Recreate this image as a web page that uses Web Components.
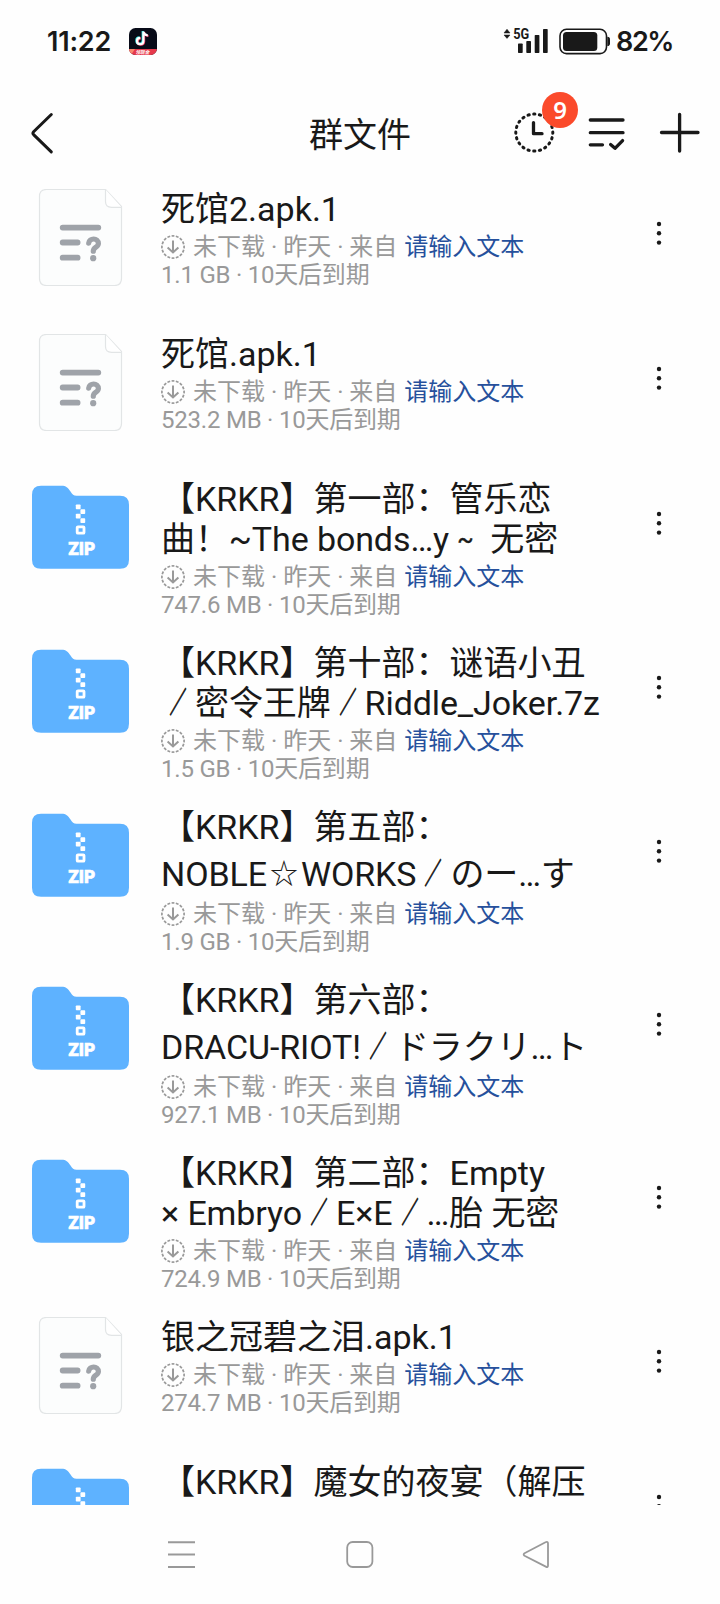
<!DOCTYPE html>
<html lang="zh-CN">
<head>
<meta charset="utf-8">
<title>群文件</title>
<style>
html,body{margin:0;background:#fefefe}
body{width:720px;height:1604px;overflow:hidden;font-family:Roboto,"Noto Sans CJK SC",sans-serif;color:#191919;text-spacing-trim:space-all}
</style>
</head>
<body>
<group-files></group-files>
<script>
const define = (name, html, setup) => customElements.define(name, class extends HTMLElement {
  connectedCallback() {
    if (this.shadowRoot) return;
    const t = document.createElement('template');
    t.innerHTML = html.trim();
    this.attachShadow({mode: 'open'}).append(t.content.cloneNode(true));
    if (setup) setup(this, this.shadowRoot);
  }
});

define('status-bar', `
<style>
:host{display:flex;align-items:flex-start;height:82px;box-sizing:border-box;padding:0 47px;font-family:Inter,Roboto,sans-serif;font-weight:600;font-size:27px;line-height:83px}
.time{width:82px;letter-spacing:-.2px}
.spacer{flex:1}
svg{display:block;flex:none}
.pct{width:57px;margin-left:6px;white-space:nowrap;line-height:84px;letter-spacing:-1.4px}
</style>
<span class="time">11:22</span>
<svg width="28" height="82" viewBox="129 0 28 82">
  <defs><clipPath id="c"><rect x="129" y="28" width="28" height="27" rx="6.5"/></clipPath></defs>
  <g clip-path="url(#c)">
    <rect x="129" y="28" width="28" height="27" fill="#080b18"/>
    <path d="M129 49H157V55H129Z" fill="#e6394c"/><path d="M129 49h6l-4 6h-2z" fill="#f8876d"/>
    <g fill="none" stroke-width="2.2"><path d="M143.4 31.5v9.7a3.2 3.2 0 1 1-3.2-3.4M143.4 32c.5 2 2 3.2 4.4 3.5" stroke="#35e5e4" transform="translate(-.7 -.5)"/><path d="M143.4 31.5v9.7a3.2 3.2 0 1 1-3.2-3.4M143.4 32c.5 2 2 3.2 4.4 3.5" stroke="#f23d63" transform="translate(.7 .5)"/><path d="M143.4 31.5v9.7a3.2 3.2 0 1 1-3.2-3.4M143.4 32c.5 2 2 3.2 4.4 3.5" stroke="#fff"/></g>
    <text x="135.5" y="53.8" font-family="Noto Sans CJK SC,sans-serif" font-size="4.6" font-weight="700" font-style="italic" fill="#fff">领现金</text>
  </g>
</svg>
<span class="spacer"></span>
<svg width="107" height="82" viewBox="503 0 107 82" fill="#191919">
  <path d="M504 33l3-3.8 3 3.8zM504 35l3 3.4 3-3.4z" stroke="#191919" stroke-width=".5"/>
  <text x="513.3" y="39" font-family="Roboto,sans-serif" font-size="13.8" font-weight="700" textLength="16" lengthAdjust="spacingAndGlyphs">5G</text>
  <rect x="518" y="43.5" width="4.7" height="9.5" rx=".7"/><rect x="526.3" y="41" width="4.7" height="12" rx=".7"/><rect x="534.7" y="35" width="4.7" height="18" rx=".7"/><rect x="543" y="29" width="4.7" height="24" rx=".7"/>
  <rect x="560" y="29.3" width="46.5" height="24.3" rx="6.5" fill="none" stroke="#191919" stroke-width="1.6"/>
  <rect x="563" y="32" width="34.3" height="19" rx="3.5"/>
  <path d="M607.3 36.8c2 0 2.7 1.2 2.7 2.6v4c0 1.400-.7 2.600-2.700 2.600z"/>
</svg>
<span class="pct">82%</span>`);

define('nav-header', `
<style>
:host{display:grid;grid-template-columns:309px 1fr 220px;height:107px}
h1{margin:0;font-size:34px;font-weight:400;line-height:106px;white-space:nowrap}
svg{display:block}
.r{position:relative;width:220px}
.badge{position:absolute;left:42px;top:10px;width:36px;height:36px;border-radius:50%;background:#fb4a2b;color:#fff;text-align:center;font:600 24px/35px "Noto Sans",sans-serif}
</style>
<svg width="309" height="107" viewBox="0 82 309 107"><path d="M51.300 114.500L33.600 131.800Q32.300 133.200 33.600 134.600L51.300 151.900" fill="none" stroke="#191919" stroke-width="3" stroke-linecap="round"/></svg>
<h1>群文件</h1>
<div class="r">
<svg width="220" height="107" viewBox="500 82 220 107" fill="none" stroke="#191919" stroke-width="3.300" stroke-linecap="round" stroke-linejoin="round">
  <circle cx="534.300" cy="132.600" r="18.500" pathLength="120" stroke-width="3" stroke-dasharray="1.300 4.700" stroke-dashoffset=".65"/>
  <path d="M533.500 122.600V133.700H542"/>
  <path d="M590.300 120H623M590.300 132.700H623M590.300 144.800H602.500M610.600 144.500L615 148.300L622.600 140.600"/>
  <path d="M661.500 132.500H698M679.600 114.300V151"/>
</svg><span class="badge">9</span></div>`);

define('doc-icon', `
<style>:host,svg{display:block}</style>
<svg width="97" height="97" viewBox="32 189 97 97">
  <path d="M46.500 189.500H105.500L121.500 206.500V278.500Q121.500 285.500 114.500 285.500H46.500Q39.500 285.500 39.500 278.500V196.500Q39.500 189.500 46.500 189.500Z" fill="#fcfdfd" stroke="#e2e5e6" stroke-width="1.200"/>
  <path d="M105.500 189.500V201.500Q105.500 207.300 111.500 207.300H121.500" fill="#fff" stroke="#e2e5e6" stroke-width="1.200"/>
  <g fill="none" stroke="#9fa3a9" stroke-width="5.800" stroke-linecap="round"><path d="M62.700 227.600H98.300M62.700 242.500H77.600M62.700 257.700H77.600"/><path d="M88.700 243.200C89 237.700 98.400 237.400 98.400 243.600C98.400 247.500 93.300 247 93.300 251.200" stroke-width="5.200"/></g>
  <circle cx="93.200" cy="258.200" r="3.100" fill="#9fa3a9"/>
</svg>`);

define('zip-icon', `
<style>:host,svg{display:block}</style>
<svg width="97" height="97" viewBox="32 479 97 97">
  <path d="M41 485.700H61.500C66 485.700 68 487.700 70.500 491.500C72.500 494.500 73.500 495.700 76.500 495.700H120Q129 495.700 129 504.700V559.700Q129 568.700 120 568.700H41Q32 568.700 32 559.700V494.700Q32 485.700 41 485.700Z" fill="#5eb2ff"/>
  <g fill="#fff"><rect x="75.800" y="504.500" width="4.800" height="4.800" rx=".8"/><rect x="80.400" y="509.200" width="4.800" height="4.800" rx=".8"/><rect x="75.800" y="513.800" width="4.800" height="4.800" rx=".8"/><rect x="80.400" y="518.300" width="4.800" height="4.800" rx=".8"/></g>
  <rect x="77.200" y="526.800" width="6.800" height="6.400" rx=".8" fill="none" stroke="#fff" stroke-width="2.800"/>
  <text x="68.200" y="555" font-family="Roboto,sans-serif" font-weight="900" font-size="18.600" textLength="27" lengthAdjust="spacingAndGlyphs" fill="#fff" stroke="#fff" stroke-width=".6">ZIP</text>
</svg>`);

define('file-row', `
<style>
:host{display:grid;grid-template-columns:97px 450px 1fr;column-gap:32px;padding-left:32px;min-height:145px;box-sizing:border-box;align-items:start;flex:none}
:host([lines="2"]){height:164px}
:host([tall]){height:173px}
.meta{display:flex;align-items:center;height:28px;font-size:24px;line-height:28px;color:#999;white-space:pre}
.first{margin-top:3px}
.size{letter-spacing:-.22px}
.meta svg{flex:none;margin-right:7px}
b{font-weight:400;color:#26509c;margin-left:1px}
.more{display:block;margin-top:30px}
</style>
<div class="ic"></div>
<div>
  <slot></slot>
  <div class="meta first"><svg width="25" height="28" viewBox="0 0 25 28" fill="none" stroke="#999" stroke-width="1.700"><circle cx="12" cy="14" r="11.100" pathLength="96" stroke-dasharray="4 2" stroke-dashoffset="2"/><path d="M12 7.500V19M6.600 14.500L12 19.500L17.400 14.500" stroke-width="2"/></svg><span>未下载 · 昨天 · 来自 <b>请输入文本</b></span></div>
  <div class="meta size"></div>
</div>
<svg class="more" width="30" height="32" viewBox="0 0 30 32" fill="#191919"><circle cx="16" cy="5" r="2.200"/><circle cx="16" cy="14.300" r="2.200"/><circle cx="16" cy="23.600" r="2.200"/></svg>`,
(el, root) => {
  const icon = document.createElement(el.getAttribute('kind') + '-icon');
  root.querySelector('.ic').append(icon);
  const size = el.getAttribute('size');
  if (size) root.querySelector('.size').textContent = size + ' · 10天后到期';
  else {
    root.querySelectorAll('.meta').forEach(m => m.remove());
    icon.shadowRoot.querySelector('text').remove();
  }
});

define('title-line', `
<style>
:host{display:block;height:40.500px;font-size:34px;line-height:40px;white-space:pre}
:host(:nth-of-type(2)){line-height:39px;letter-spacing:-.1px}
:host([tall]){height:49px;line-height:53px}
::slotted(i){display:inline-block;width:34px;font-style:normal;transform:scale(.5,.86);-webkit-text-stroke:1.100px}
::slotted(em){display:inline-block;font-style:normal;transform:scale(.82)}
::slotted(small){font-size:24px;position:relative;top:-3px;-webkit-text-stroke:.5px}
</style><slot></slot>`);

define('system-nav', `
<style>:host{display:flex;justify-content:space-between;height:99px;padding:0 169px 0 167px;align-items:flex-start}svg{display:block;margin-top:34px}</style>
<svg width="29" height="32" fill="none" stroke="#999" stroke-width="1.900"><path d="M1 3.200H28M1 15.500H28M1 28H28"/></svg>
<svg width="29" height="32" viewBox="0 0 29 32" fill="none" stroke="#999" stroke-width="1.800"><rect x="2.200" y="3" width="25.200" height="25" rx="5.500"/></svg>
<svg width="29" height="32" fill="none" stroke="#999" stroke-width="1.800" stroke-linejoin="round"><path d="M2.500 14.200L23.500 3.300Q26 2.200 26 4.500V26.500Q26 28.800 23.800 27.600L2.500 16.800Q.8 15.500 2.500 14.200Z"/></svg>`);

define('group-files', `
<style>
:host{display:flex;flex-direction:column;height:1604px}
main{display:flex;flex-direction:column;height:1316px;overflow:hidden}
</style>
<status-bar></status-bar>
<nav-header></nav-header>
<main>
<file-row kind="doc" size="1.1 GB"><title-line>死馆2.apk.1</title-line></file-row>
<file-row kind="doc" size="523.2 MB"><title-line>死馆.apk.1</title-line></file-row>
<file-row kind="zip" size="747.6 MB" lines="2"><title-line>【KRKR】第一部：管乐恋</title-line><title-line>曲！~The bonds…y <small>~</small>  无密</title-line></file-row>
<file-row kind="zip" size="1.5 GB" lines="2"><title-line>【KRKR】第十部：谜语小丑</title-line><title-line><i>／</i>密令王牌<i>／</i>Riddle_Joker.7z</title-line></file-row>
<file-row kind="zip" size="1.9 GB" tall><title-line>【KRKR】第五部：</title-line><title-line tall>NOBLE<em>☆</em>WORKS<i>／</i>のー…す</title-line></file-row>
<file-row kind="zip" size="927.1 MB" tall><title-line>【KRKR】第六部：</title-line><title-line tall>DRACU-RIOT!<i>／</i>ドラクリ…ト</title-line></file-row>
<file-row kind="zip" size="724.9 MB" lines="2"><title-line>【KRKR】第二部：Empty</title-line><title-line>× Embryo<i>／</i>E×E<i>／</i>…胎 无密</title-line></file-row>
<file-row kind="doc" size="274.7 MB"><title-line>银之冠碧之泪.apk.1</title-line></file-row>
<file-row kind="zip" size="" lines="2"><title-line>【KRKR】魔女的夜宴（解压</title-line></file-row>
</main>
<system-nav></system-nav>`);
</script>
</body>
</html>
